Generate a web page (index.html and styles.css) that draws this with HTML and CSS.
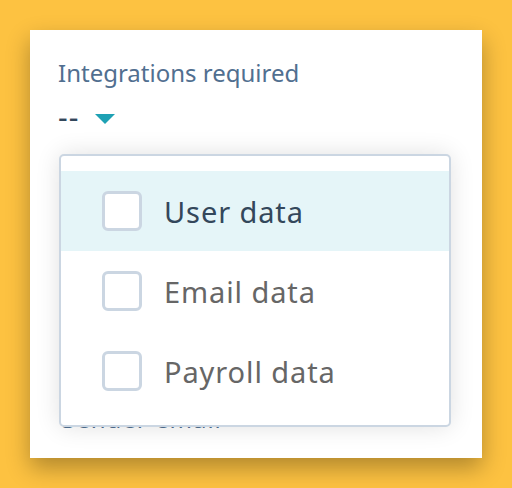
FILE: index.html
```html
<!DOCTYPE html>
<html>
<head>
<meta charset="utf-8">
<link rel="stylesheet" href="styles.css">
</head>
<body>
<div class="card">
  <div class="label">Integrations required</div>
  <div class="select">
    <span class="value">--</span>
    <svg class="caret" width="20" height="10" viewBox="0 0 20 10"><path d="M0 0 H20 L10 10 Z" fill="#1ea1b4"/></svg>
  </div>
  <div class="label next">Sender email</div>
  <div class="menu">
    <div class="option active"><span class="box"></span><span class="text">User data</span></div>
    <div class="option"><span class="box"></span><span class="text">Email data</span></div>
    <div class="option"><span class="box"></span><span class="text">Payroll data</span></div>
  </div>
</div>
</body>
</html>
```

FILE: styles.css
```css
html, body {
  margin: 0;
  padding: 0;
}
body {
  width: 512px;
  height: 488px;
  background: #fdc241;
  overflow: hidden;
  font-family: "Noto Sans", sans-serif;
}
.card {
  position: relative;
  margin: 30px 0 0 30px;
  width: 452px;
  height: 428px;
  background: #fff;
  box-shadow: 0 10px 22px rgba(0, 0, 0, 0.3);
  box-sizing: border-box;
  padding: 28px 28px 0;
}
.label {
  color: #516f90;
  font-size: 24px;
  line-height: 30px;
}
.select {
  display: flex;
  align-items: center;
  gap: 16px;
  margin-top: 14px;
  height: 30px;
}
.value {
  color: #33475b;
  font-size: 30px;
  line-height: 30px;
  letter-spacing: 1px;
}
.caret {
  display: block;
  margin-top: 4px;
}
.next {
  margin-top: 272px;
  margin-left: 4px;
  letter-spacing: 1px;
}
.menu {
  position: absolute;
  left: 29px;
  top: 124px;
  width: 392px;
  height: 273px;
  box-sizing: border-box;
  background: #fff;
  border: 2px solid #cbd6e2;
  border-radius: 5px;
  padding: 15px 0;
  box-shadow: 0 0 24px rgba(0, 0, 0, 0.12);
}
.option {
  display: flex;
  align-items: center;
  height: 80px;
  padding-left: 41px;
  gap: 22px;
}
.option.active {
  background: #e5f5f8;
}
.box {
  width: 40px;
  height: 40px;
  box-sizing: border-box;
  border: 3px solid #cbd6e2;
  border-radius: 6px;
  background: #fff;
}
.text {
  color: #666;
  font-size: 29px;
  letter-spacing: 0.9px;
}
.active .text {
  color: #33475b;
}
```
